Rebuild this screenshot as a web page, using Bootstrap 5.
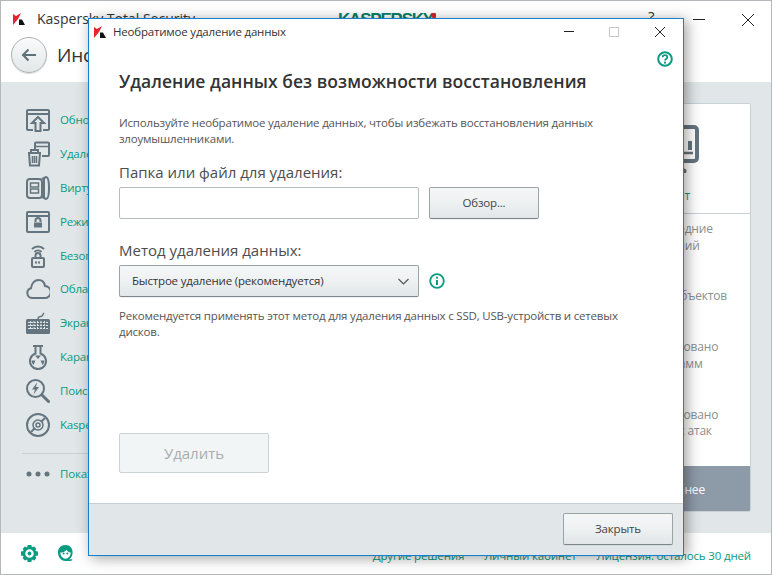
<!DOCTYPE html>
<html lang="ru">
<head>
<meta charset="utf-8">
<title>Kaspersky Total Security</title>
<link href="https://cdn.jsdelivr.net/npm/bootstrap@5.3.0/dist/css/bootstrap.min.css" rel="stylesheet">
<style>
html,body{margin:0;height:575px;overflow:hidden;background:#fff}
body{font-family:"Open Sans","Noto Sans","Liberation Sans",sans-serif;font-size:11.5px;line-height:16px;color:#4d4d4d;letter-spacing:-.19px}
.app-win{width:772px;height:575px;border:1px solid #b4b8ba;position:relative;overflow:hidden}
.app-head{height:81px;background:#fff}
.title-row{height:35px;padding:1px 12px 0 12px}
.app-title{font-size:14px;line-height:20px;color:#333;margin-left:12px;letter-spacing:0}
.brand-name{position:absolute;left:337px;top:8px;font-family:"Liberation Sans",sans-serif;font-weight:700;font-size:17px;line-height:22px;letter-spacing:-1.2px;color:#0b7f66}
.brand-r{position:absolute;left:431px;top:12px;width:4px;height:5px;background:#d8262c;border-radius:1px}
.help-q{position:absolute;left:647px;top:6px;font-size:15px;line-height:18px;color:#333}
.win-min{position:absolute;left:692px;top:18px;width:12px;height:1px;background:#222}
.win-x{position:absolute;left:741px;top:13px}
.back-row{padding:1px 0 0 10px}
.back-btn{width:36px;height:36px;border-radius:50%;border:1px solid #aab2b5;background:linear-gradient(#fafbfb,#e3e7e8);box-shadow:0 1px 1px rgba(0,0,0,.15);padding:0}
.page-title{font-size:19px;line-height:36px;color:#333;margin-left:10px;font-weight:500}
.app-main{height:451px;background:#e1e6e8}
.side-col{width:560px;padding:21px 0 0 25px;flex:none}
.side-item{height:33.9px;color:#0a9b80;white-space:nowrap}
.side-item svg{width:24px;height:26px;margin-right:10px;flex:none}
.side-txt{font-size:11.5px}
.side-rule{height:1px;background:#c8d0d4;margin:11px 0 3px -4px;width:400px}
.info-card{width:156px;height:409px;margin:21px 20px 0 auto;border:1px solid #c8d2d6;border-radius:2px;background:#fff;overflow:hidden}
.report-top{height:110px;border-bottom:1px solid #c8d2d6;padding-top:21px;color:#0a9b80}
.report-top svg{width:52px;height:48px;display:block;margin:0 auto}
.report-name{margin-top:15px;font-size:12px}
.stat-box{padding:7px 0 0 33px;color:#8b8f92;line-height:16.7px;font-size:12px;height:252px}
.stat-box div{margin-bottom:34px;white-space:nowrap}
.more-bar{height:46px;background:#8d9aa8;color:#fff;font-size:12px;line-height:48px}
.app-foot{height:41px;background:#fff;padding:0 20px 0 20px;color:#0a9b80;font-size:11.5px;letter-spacing:-.15px}
.foot-icons{gap:19px}
.foot-links{gap:20px;padding-top:15px}
.dlg{position:absolute;left:87px;top:17px;width:596px;height:538px;background:#fff;border:1px solid #1580d0;box-shadow:3px 2px 13px rgba(0,0,0,.38);z-index:5}
.dlg-title{height:25px;padding-left:5px;color:#333;flex:none}
.dlg-title svg{margin-right:7px}
.dlg-min{position:absolute;left:475px;top:12px;width:10px;height:1px;background:#222}
.dlg-max{position:absolute;left:520px;top:8px;width:10px;height:10px;border:1px solid #c9c9c9}
.dlg-x{position:absolute;left:566px;top:8px}
.dlg-body{padding:0 10px 0 30px}
.help-wrap{height:25px;padding-top:7px}
.dlg-head{font-size:17.5px;line-height:24px;font-weight:600;color:#333;margin:0 0 22px;letter-spacing:.03px}
.dlg-para{margin:0;width:510px;height:32px;color:#555}
.dlg-label{font-size:15px;line-height:22px;color:#4d4d4d;margin:14px 0 4px;letter-spacing:0}
.label-two{margin-top:20px}
.file-input{width:300px;height:32px;border:1px solid #b7bcbe;border-radius:2px;background:#fff;padding:0}
.grey-btn{height:32px;border-radius:2px;border:1px solid #9aa3a6;border-bottom-color:#7d878b;background:linear-gradient(#f5f7f7 0,#eef1f2 50%,#e1e6e8 100%);color:#444;font-size:11.5px;letter-spacing:-.19px;padding:0;box-shadow:0 1px 0 rgba(0,0,0,.05)}
.browse-btn{width:110px;margin-left:10px}
.method-sel{width:300px;padding:0 9px 0 12px;color:#333}
.method-row{margin-bottom:11px}
.info-ico{margin-left:10px}
.del-btn{width:150px;height:40px;font-size:15px;color:#a8adaf;border:1px solid #cdd2d4;background:#f2f5f5;border-radius:2px;margin-top:93px;padding:0;opacity:1;letter-spacing:0}
.del-btn:disabled{color:#a8adaf;border-color:#cdd2d4;background:#f2f5f5;opacity:1}
.dlg-foot{height:52px;background:#e1e6e8;border-top:1px solid #c8d0d4;padding:9px 10px 0 0;flex:none}
.close-btn{width:110px}
</style>
</head>
<body>
<div class="app-win">
  <div class="app-head">
    <div class="title-row d-flex align-items-center">
      <svg width="12" height="12" viewBox="0 0 12 12"><path fill="#e3262e" d="M0 1l3 2 5-3-3 6-5 6z"/><path fill="#111" d="M6 6.5h3l3 5.500H6z"/></svg>
      <span class="app-title">Kaspersky Total Security</span>
    </div>
    <span class="brand-name">KASPERSKY</span><span class="brand-r"></span>
    <span class="help-q">?</span><span class="win-min"></span>
    <svg class="win-x" width="12" height="12" viewBox="0 0 12 12"><path stroke="#222" fill="none" d="M0 0l12 12M12 0L0 12"/></svg>
    <div class="back-row d-flex align-items-center">
      <button class="back-btn d-flex align-items-center justify-content-center" type="button" aria-label="Назад">
        <svg width="16" height="14" viewBox="0 0 16 14"><path stroke="#5f7079" stroke-width="2" fill="none" d="M15 7H2M7.500 1.500L2 7l5.500 5.500"/></svg>
      </button>
      <span class="page-title">Инструменты</span>
    </div>
  </div>

  <div class="app-main d-flex">
    <div class="side-col">
      <div class="side-item d-flex align-items-center">
        <svg viewBox="0 0 24 26" fill="none" stroke="#64757f" stroke-width="2"><path d="M7 23H2a1 1 0 0 1-1-1V4a1 1 0 0 1 1-1h20a1 1 0 0 1 1 1v18a1 1 0 0 1-1 1h-5"/><path d="M1 7h22"/><path d="M12 10l-6 6h3.500v8h5v-8H18z"/></svg>
        <span class="side-txt">Обновление баз и модулей</span>
      </div>
      <div class="side-item d-flex align-items-center">
        <svg viewBox="0 0 24 26" fill="none" stroke="#64757f" stroke-width="2"><path d="M9 8V2.500a1 1 0 0 1 1-1h12a1 1 0 0 1 1 1V14a1 1 0 0 1-1 1h-6"/><path d="M9 5.500h14" stroke-width="1.500"/><path fill="#e1e6e8" d="M2 12h13M3 12l1 12.500h9l1-12.500M5 12V9h7v3"/><path stroke-width="1.500" d="M6.500 15v7M8.500 15v7M10.500 15v7"/></svg>
        <span class="side-txt">Удаление данных</span>
      </div>
      <div class="side-item d-flex align-items-center">
        <svg viewBox="0 0 24 26" fill="none" stroke="#64757f" stroke-width="2"><rect x="1" y="4" width="15" height="19" rx="3"/><path d="M16 4l4-2c2 0 3 3 3 11s-1 11-3 11l-4-2M18 3v20"/><path stroke-width="1.500" d="M4.500 8h8v4h-8zM4.500 14h8v4h-8z"/></svg>
        <span class="side-txt">Виртуальные сейфы данных</span>
      </div>
      <div class="side-item d-flex align-items-center">
        <svg viewBox="0 0 24 26" fill="none" stroke="#64757f" stroke-width="2"><rect x="1" y="3" width="22" height="20" rx="1"/><path d="M1 7h22"/><path d="M9.500 13v-1.500a2.500 2.500 0 0 1 5 0V13"/><rect x="8" y="13.500" width="8" height="5" fill="#64757f" stroke="none"/></svg>
        <span class="side-txt">Режим безопасных программ</span>
      </div>
      <div class="side-item d-flex align-items-center">
        <svg viewBox="0 0 24 26" fill="none" stroke="#64757f" stroke-width="2"><path d="M6 6c3.500-3.500 8.500-3.500 12 0M8.500 9c2-2 5-2 7 0"/><path d="M9.500 15v-2.500a2.500 2.500 0 0 1 5 0V15"/><rect x="6" y="15" width="12" height="9" rx="1"/><path d="M9 19.500h6" stroke-dasharray="2 1"/></svg>
        <span class="side-txt">Безопасное соединение</span>
      </div>
      <div class="side-item d-flex align-items-center">
        <svg viewBox="0 0 24 26" fill="none" stroke="#64757f" stroke-width="2"><path d="M6 22a5 5 0 0 1-1-9.800C5.500 7 9 4 12.500 4c3.500 0 6 2.500 6.500 6a6 6 0 0 1-.5 12z"/></svg>
        <span class="side-txt">Облачная защита</span>
      </div>
      <div class="side-item d-flex align-items-center">
        <svg viewBox="0 0 24 26" fill="none" stroke="#64757f"><rect x="0" y="9" width="24" height="15" rx="1.500" fill="#64757f" stroke="none"/><path stroke="#e1e6e8" d="M2 12.500h20M2 15.500h20M2 18.500h20M4.500 11v9M8 11v9M11.500 11v9M15 11v9M18.500 11v9" stroke-dasharray="2 1"/><path stroke-width="1.500" d="M12 9c0-3 3-2 4-3s1-2 2-3"/></svg>
        <span class="side-txt">Экранная клавиатура</span>
      </div>
      <div class="side-item d-flex align-items-center">
        <svg viewBox="0 0 24 26" fill="none" stroke="#64757f" stroke-width="2"><path d="M7 2h10M9.500 2v7.500a8 8 0 1 0 5 0V2"/><path fill="#64757f" stroke="none" d="M12 15l-3-3.500h6zM9.500 16.500h-4a6.500 6.500 0 0 0 2 4.500zM14.500 16.500h4a6.500 6.500 0 0 1-2 4.500z"/></svg>
        <span class="side-txt">Карантин</span>
      </div>
      <div class="side-item d-flex align-items-center">
        <svg viewBox="0 0 24 26" fill="none" stroke="#64757f" stroke-width="2"><circle cx="9.500" cy="10.500" r="8.500"/><path stroke-width="3" stroke-linecap="round" d="M16 17l6.500 6.500"/><path fill="#64757f" stroke="none" d="M11 4.500L6 11.500h3l-1.500 5 5.500-7.500H10z"/></svg>
        <span class="side-txt">Поиск уязвимостей</span>
      </div>
      <div class="side-item d-flex align-items-center">
        <svg viewBox="0 0 24 26" fill="none" stroke="#64757f" stroke-width="2"><circle cx="12" cy="13" r="11"/><circle cx="12" cy="13" r="5" stroke-width="1.500"/><circle cx="12" cy="13" r="2" stroke-width="1.500"/><path d="M5 20l4-4M15 10l4-4"/></svg>
        <span class="side-txt">Kaspersky Rescue Disk</span>
      </div>
      <div class="side-rule"></div>
      <div class="side-item d-flex align-items-center">
        <svg viewBox="0 0 24 26" fill="#64757f"><circle cx="3" cy="13" r="2.500"/><circle cx="12" cy="13" r="2.500"/><circle cx="21" cy="13" r="2.500"/></svg>
        <span class="side-txt">Показать дополнительные</span>
      </div>
    </div>

    <div class="info-card">
      <div class="report-top text-center">
        <svg viewBox="0 0 52 48" fill="none" stroke="#64757f" stroke-width="4"><rect x="2" y="2" width="48" height="34" rx="3"/><path fill="#64757f" stroke="none" d="M33 21h4v4h-4zM41 16h4v9h-4z"/><path stroke-width="2.500" d="M10 28h36"/><circle cx="37" cy="46" r="2.500" fill="#64757f" stroke="none"/></svg>
        <div class="report-name">Отчет</div>
      </div>
      <div class="stat-box">
        <div>Все последние<br>обновлений</div>
        <div>Всего 0 объектов</div>
        <div>Заблокировано<br>10 программ</div>
        <div>Заблокировано<br>5 сетевых атак</div>
      </div>
      <div class="more-bar text-center">Подробнее</div>
    </div>
  </div>

  <div class="app-foot d-flex justify-content-between">
    <div class="foot-icons d-flex align-items-center">
      <svg width="17" height="17" viewBox="0 0 18 18"><path fill="#0a9b80" fill-rule="evenodd" d="M7 0h4l.5 2.500 2.300-1 2.400 2.500-1 2.300L18 7v4l-2.800.700 1 2.300-2.400 2.400-2.300-1L11 18H7l-.5-2.600-2.300 1L1.800 14l1-2.300L0 11V7l2.800-.700-1-2.300 2.400-2.400 2.300 1zM9 4.500a4.500 4.500 0 1 0 0 9 4.500 4.500 0 0 0 0-9z"/><circle cx="9" cy="9" r="2" fill="#0a9b80"/></svg>
      <svg width="17" height="17" viewBox="0 0 18 18"><path fill="#0a9b80" d="M9 0C4 0 1 3.500 1 8c0 4.500 3 9 8 9h3.500c2 0 3.500-.5 4-1.500l-1.500-.8c-.5.500-1 .6-2 .6 2-1.500 3.500-4 3.500-7.300C16.500 3.500 14 0 9 0z"/><path fill="#fff" d="M3.500 8c2 0 5.500-1 6.500-3 1 1.500 2.500 3 4.500 3 0 3.500-2.500 6.500-5.500 6.500S3.500 11.500 3.500 8z"/><circle cx="7" cy="9" r="1.100" fill="#0a9b80"/><circle cx="11" cy="9" r="1.100" fill="#0a9b80"/></svg>
    </div>
    <div class="foot-links d-flex">
      <span>Другие решения</span><span>Личный кабинет</span><span>Лицензия: осталось 30 дней</span>
    </div>
  </div>

  <div class="dlg d-flex flex-column">
    <div class="dlg-title d-flex align-items-center">
      <svg width="12" height="12" viewBox="0 0 12 12"><path fill="#e3262e" d="M0 1l3 2 5-3-3 6-5 6z"/><path fill="#111" d="M6 6.500h3l3 5.500H6z"/></svg>
      <span>Необратимое удаление данных</span>
      <span class="dlg-min"></span><span class="dlg-max"></span>
      <svg class="dlg-x" width="10" height="10" viewBox="0 0 10 10"><path stroke="#222" fill="none" d="M0 0l10 10M10 0L0 10"/></svg>
    </div>
    <div class="dlg-body flex-grow-1">
      <div class="help-wrap d-flex justify-content-end">
        <svg width="16" height="16" viewBox="0 0 16 16" fill="none"><circle cx="8" cy="8" r="6.800" stroke="#0a9b80" stroke-width="2"/><path stroke="#0a9b80" stroke-width="1.800" d="M5.700 6.300c0-3 4.600-3 4.600 0 0 1.700-2.300 1.700-2.300 3.300"/><circle cx="8" cy="11.700" r="1.100" fill="#0a9b80"/></svg>
      </div>
      <h1 class="dlg-head">Удаление данных без возможности восстановления</h1>
      <p class="dlg-para">Используйте необратимое удаление данных, чтобы избежать восстановления данных злоумышленниками.</p>
      <div class="dlg-label">Папка или файл для удаления:</div>
      <div class="d-flex">
        <input class="file-input" type="text" aria-label="Папка или файл">
        <button class="btn grey-btn browse-btn" type="button">Обзор...</button>
      </div>
      <div class="dlg-label label-two">Метод удаления данных:</div>
      <div class="method-row d-flex align-items-center">
        <button class="btn grey-btn method-sel d-flex align-items-center justify-content-between" type="button">
          <span>Быстрое удаление (рекомендуется)</span>
          <svg width="11" height="7" viewBox="0 0 11 7"><path d="M.5 1l5 5 5-5" fill="none" stroke="#555" stroke-width="1.200"/></svg>
        </button>
        <svg class="info-ico" width="16" height="16" viewBox="0 0 16 16" fill="none"><circle cx="8" cy="8" r="6.800" stroke="#0a9b80" stroke-width="1.800"/><path stroke="#0a9b80" stroke-width="2" d="M8 7v5"/><circle cx="8" cy="4.700" r="1.100" fill="#0a9b80"/></svg>
      </div>
      <p class="dlg-para">Рекомендуется применять этот метод для удаления данных с SSD, USB-устройств и сетевых дисков.</p>
      <button class="btn del-btn" type="button" disabled>Удалить</button>
    </div>
    <div class="dlg-foot d-flex justify-content-end">
      <button class="btn grey-btn close-btn" type="button">Закрыть</button>
    </div>
  </div>
</div>
</body>
</html>
